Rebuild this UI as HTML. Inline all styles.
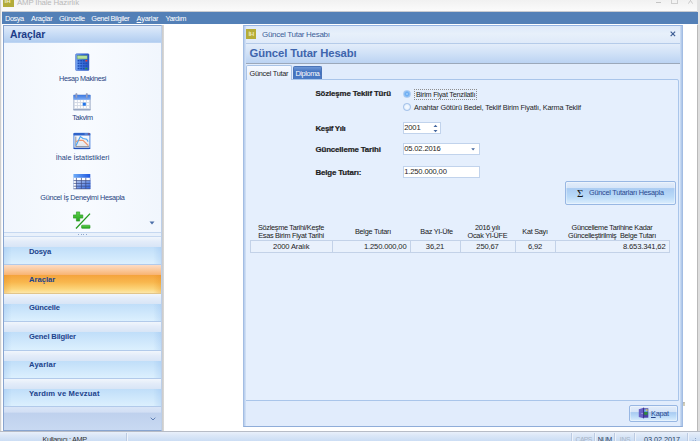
<!DOCTYPE html>
<html lang="tr">
<head>
<meta charset="utf-8">
<title>AMP İhale Hazırlık</title>
<style>
*{box-sizing:border-box;margin:0;padding:0}
html,body{width:700px;height:441px;overflow:hidden;background:#fff}
body{position:relative;font-family:"Liberation Sans","DejaVu Sans",sans-serif;font-size:7.3px;letter-spacing:-0.25px;color:#1e1e1e;line-height:1}
.a{position:absolute;white-space:pre}
.t{position:absolute;white-space:pre;line-height:10px;height:10px}
.b{font-weight:bold}
.c{text-align:center}
.r{text-align:right}
/* window chrome */
#titlebar{left:0;top:0;width:700px;height:11px;background:linear-gradient(#f1f1f1,#fbfbfb)}
#tline{left:0;top:11px;width:700px;height:1px;background:#c9ccd1}
#lborder{left:0;top:0;width:2px;height:441px;background:linear-gradient(90deg,#cfcfcf 0,#cfcfcf 1px,#f4f4f4 1px)}
#rborder{left:697px;top:0;width:3px;height:441px;background:linear-gradient(90deg,#b9b9b9 0,#b9b9b9 1.3px,#dedede 1.3px)}
#menubar{left:2px;top:12px;width:695.6px;height:12px;background:#5380b7}
#menubar span{position:absolute;top:1.6px;color:#fff;font-size:7.4px;line-height:10px;letter-spacing:-0.2px}
/* left panel */
#lp{left:3px;top:25px;width:159px;height:406px;background:#f4f8fe;border:1px solid #88a4cf;border-right:1px solid #bccfe9}
#lphead{left:0;top:0;width:157px;height:17.4px;background:linear-gradient(#e0ebfa 0,#c9ddf6 45%,#b3cef0 92%,#c4d9f4 100%)}
#lpbody{left:0;top:17.4px;width:157px;height:188.6px;background:linear-gradient(90deg,#f1f6fd,#f8fbff 50%,#f1f6fd)}
.itl{color:#27457f;left:0;width:157px;text-align:center}
.nav{left:0;width:157px;height:28.4px}
.nav i{position:absolute;left:0;top:0;width:100%;height:10px;background:linear-gradient(#f1f6fc,#e3ecf9 45%,#d8e5f6)}
.nav b{position:absolute;left:0;top:10px;width:100%;bottom:0;background:linear-gradient(90deg,rgba(120,170,230,.22),rgba(120,170,230,0) 5%,rgba(120,170,230,0) 95%,rgba(120,170,230,.22)),linear-gradient(#c0def9,#dcf0fe);border-bottom:1px solid #b2caea}
.nav span{position:absolute;left:25px;top:9.5px;line-height:10px;font-weight:bold;color:#21438c;font-size:7.6px;letter-spacing:-0.1px}
.nav.sel i{background:linear-gradient(#fddcc5,#fbc99c 50%,#f8b371)}
.nav.sel b{background:linear-gradient(90deg,rgba(225,135,25,.28),rgba(225,135,25,0) 5%,rgba(225,135,25,0) 95%,rgba(225,135,25,.28)),linear-gradient(#f5a33c 0,#f8b74e 40%,#fcd57a 78%,#fde7a8 100%);border-bottom:1px solid #e2c58a}
/* dialog */
#dlg{left:243px;top:25px;width:440px;height:402px;background:#e1ecfc;border:1px solid #a3bde3;border-top-color:#94b3e2;border-bottom-color:#8fadd9}
#dtitle{left:0;top:0;width:438px;height:17px;background:linear-gradient(#dde9f9,#e7f0fb 45%,#dfeaf9)}
#dhead{left:0;top:17px;width:438px;height:21px;background:linear-gradient(#e3edfa 0,#d0e1f7 50%,#bbd3f2 100%);border-top:1px solid #b5cbe9;border-bottom:1px solid #9ba8ba}
#page{left:1px;top:53px;width:434px;height:322px;background:#e5effd;border:1px solid #a9c5ea;border-radius:0 2px 0 0}
.inp{background:#fff;border:1px solid #c1d3ec;height:12px}
.btn{border:1px solid #98b7e3;border-radius:2px;background:linear-gradient(#e3edfa 0,#d6e5f8 5.6px,#a9cbf2 6.6px,#badaf8 68%,#dceefd 100%);box-shadow:inset 0 0 0 1px rgba(255,255,255,.35)}
.gh{color:#202020;text-align:center;line-height:8px;letter-spacing:-0.28px}
.gc{top:161.4px;height:13px;background:#e9f1fc;border:1px solid #c3d2e8;border-left:none;line-height:11.4px;color:#1e1e1e;font-size:7.6px;letter-spacing:-0.15px}
/* status */
#status{left:0;top:431px;width:700px;height:10px;background:linear-gradient(#e9f0fa 0,#dbe7f7 40%,#cbddf4 100%);border-top:1px solid #b7bcc6}
#status .sep{position:absolute;top:1px;width:1px;height:9px;background:#bccbe2;box-shadow:1px 0 0 #eef3fb}
</style>
</head>
<body>
<!-- main window title (cropped) -->
<div class="a" id="titlebar"></div>
<div class="a" style="left:3px;top:-4px;width:11px;height:11px;background:#b3ac3b"></div>
<div class="a" style="left:4.6px;top:-1.6px;font-size:6px;color:#efecc6;font-weight:bold;letter-spacing:0">İH</div>
<div class="a" style="left:17px;top:-1.7px;font-size:7.8px;line-height:10px;color:#b9b9b9;letter-spacing:-0.14px">AMP İhale Hazırlık</div>
<div class="a" style="left:656px;top:2px;width:5px;height:1px;background:#c4c4c4"></div>
<div class="a" style="left:671px;top:-2px;width:7px;height:6px;border:1px solid #cfcfcf;border-top:2px solid #cfcfcf"></div>
<svg class="a" style="left:688px;top:-2.6px" width="5" height="7" viewBox="0 0 5 7"><path d="M.3 .3L4.7 6.7M4.7 .3L.3 6.7" stroke="#c6c6c6" stroke-width=".9" fill="none"/></svg>
<div class="a" id="tline"></div>
<div class="a" id="lborder"></div>
<div class="a" id="rborder"></div>
<div class="a" style="left:697px;top:0;width:3px;height:25px;background:#e3e3e3"></div>

<div class="a" style="left:162px;top:25px;width:2px;height:406px;background:linear-gradient(90deg,#c9c9c9,#dbdbdb)"></div>
<!-- menu bar -->
<div class="a" id="menubar">
<span style="left:3px;letter-spacing:-0.45px">Dosya</span><span style="left:29px;letter-spacing:-0.3px">Araçlar</span><span style="left:57px;letter-spacing:-0.42px">Güncelle</span><span style="left:89.3px;letter-spacing:-0.42px">Genel Bilgiler</span><span style="left:134.6px;letter-spacing:-0.22px"><u>A</u>yarlar</span><span style="left:163.6px;letter-spacing:-0.5px">Yardım</span>
</div>

<!-- left navigation panel -->
<div class="a" id="lp">
 <div class="a" id="lphead"><span class="a b" style="left:6px;top:3px;font-size:10.4px;line-height:12px;color:#1d3c88;letter-spacing:-0.1px">Araçlar</span></div>
 <div class="a" id="lpbody"></div>
 <!-- calculator icon -->
 <svg class="a" style="left:71px;top:27px" width="15" height="18" viewBox="0 0 15 18">
  <defs><linearGradient id="gc" x1="0" x2="1" y1="0" y2="0"><stop offset="0" stop-color="#7eabf3"/><stop offset=".45" stop-color="#3f76e2"/><stop offset="1" stop-color="#2a55c0"/></linearGradient></defs>
  <rect x=".6" y=".8" width="13.4" height="16.8" rx="1" fill="url(#gc)" stroke="#2d59c4" stroke-width=".5"/>
  <rect x="2.1" y="2.7" width="10.1" height="3.3" fill="#b3e09b" stroke="#5c8d6b" stroke-width=".5"/>
  <g fill="#1d4cb4"><rect x="2.6" y="7" width="1.9" height="1.5"/><rect x="5.2" y="7" width="1.9" height="1.5"/><rect x="7.8" y="7" width="1.9" height="1.5"/>
  <rect x="2.6" y="9.6" width="1.9" height="1.5"/><rect x="5.2" y="9.6" width="1.9" height="1.5"/><rect x="7.8" y="9.6" width="1.9" height="1.5"/><rect x="10.4" y="9.6" width="1.9" height="1.5"/>
  <rect x="2.6" y="12.2" width="1.9" height="1.5"/><rect x="5.2" y="12.2" width="1.9" height="1.5"/><rect x="7.8" y="12.2" width="1.9" height="1.5"/><rect x="10.4" y="12.2" width="1.9" height="1.5"/>
  <rect x="2.6" y="14.8" width="1.9" height="1.5"/><rect x="5.2" y="14.8" width="1.9" height="1.5"/><rect x="7.8" y="14.8" width="1.9" height="1.5"/></g>
  <rect x="10.4" y="7" width="1.9" height="1.5" fill="#e8392b"/><rect x="10.4" y="14.8" width="1.9" height="1.5" fill="#27a02f"/>
 </svg>
 <div class="t itl" style="top:48px;letter-spacing:-0.36px">Hesap Makinesi</div>
 <!-- calendar icon -->
 <svg class="a" style="left:69px;top:67px" width="18" height="18" viewBox="0 0 18 18">
  <defs><linearGradient id="gk" x1="0" x2="0" y1="0" y2="1"><stop offset="0" stop-color="#3a78e2"/><stop offset="1" stop-color="#7eabf3"/></linearGradient></defs>
  <rect x=".4" y="1.9" width="17.1" height="15.2" rx=".8" fill="#d2d9e5" stroke="#9cabc6" stroke-width=".5"/>
  <rect x=".4" y="16.2" width="17.1" height="1.1" fill="#8c9dbb"/>
  <rect x=".4" y="1.9" width="17.1" height="4.9" fill="url(#gk)"/>
  <g fill="#fff"><rect x="1.8" y="7.1" width="2.1" height="2"/><rect x="4.8" y="7.1" width="2.1" height="2"/><rect x="7.8" y="7.1" width="2.1" height="2"/><rect x="10.8" y="7.1" width="2.1" height="2"/><rect x="13.8" y="7.1" width="2.1" height="2"/>
  <rect x="1.8" y="10.1" width="2.1" height="2"/><rect x="4.8" y="10.1" width="2.1" height="2"/><rect x="7.8" y="10.1" width="2.1" height="2"/><rect x="13.8" y="10.1" width="2.1" height="2"/>
  <rect x="1.8" y="13.1" width="2.1" height="2"/><rect x="4.8" y="13.1" width="2.1" height="2"/><rect x="7.8" y="13.1" width="2.1" height="2"/><rect x="10.8" y="13.1" width="2.1" height="2"/><rect x="13.8" y="13.1" width="2.1" height="2"/></g>
  <rect x="9.7" y="9.7" width="3.1" height="3" fill="#1f74ea"/>
  <g fill="#9aa3c6" stroke="#7d87ad" stroke-width=".3"><rect x="2.6" y=".3" width="1.6" height="4.7" rx=".8"/><rect x="13" y=".3" width="1.6" height="4.7" rx=".8"/></g>
 </svg>
 <div class="t itl" style="top:87px;letter-spacing:-0.4px">Takvim</div>
 <!-- chart icon -->
 <svg class="a" style="left:69px;top:106px" width="18" height="18" viewBox="0 0 18 18">
  <defs><linearGradient id="gh" x1="0" x2="0" y1="0" y2="1"><stop offset="0" stop-color="#fbfcfe"/><stop offset="1" stop-color="#dfe3ea"/></linearGradient></defs>
  <rect x=".9" y="1.3" width="16" height="15.4" rx=".8" fill="url(#gh)" stroke="#3f7adf" stroke-width=".9"/>
  <rect x=".5" y=".9" width="16.8" height="2.5" rx=".6" fill="#2f63c9"/>
  <rect x=".5" y="15.8" width="16.8" height="1.3" rx=".4" fill="#2350b8"/>
  <rect x="11.6" y="1.5" width="3.2" height="1" fill="#7ea6e6"/><rect x="15.2" y="1.4" width="1.3" height="1.2" fill="#c0564a"/>
  <path d="M2.8 4.6V14.6H16" fill="none" stroke="#6b6f78" stroke-width=".7"/>
  <path d="M3.1 9.6L6 8.3L10 8.3L15.4 13.7" fill="none" stroke="#f0946a" stroke-width="1.2"/>
  <path d="M3.1 13.6L7.3 4.5L10 6.5L13.6 7.2L15.2 9.6" fill="none" stroke="#48a4f6" stroke-width="1.1"/>
 </svg>
 <div class="t itl" style="top:126.5px;letter-spacing:-0.02px">İhale İstatistikleri</div>
 <!-- table icon -->
 <svg class="a" style="left:69px;top:147px" width="18" height="17" viewBox="0 0 18 17">
  <defs><linearGradient id="gt" x1="0" x2="1" y1="0" y2="0"><stop offset="0" stop-color="#6eacf8"/><stop offset="1" stop-color="#1f58e0"/></linearGradient>
  <linearGradient id="gs" x1="0" x2="1" y1="0" y2="1"><stop offset="0" stop-color="#b6caf2"/><stop offset="1" stop-color="#2a62e2"/></linearGradient></defs>
  <rect x=".4" y="1" width="16.9" height="14.9" fill="#fff"/>
  <rect x="3.4" y="7.6" width="13.9" height="8.3" fill="url(#gs)"/>
  <rect x=".4" y="1" width="16.9" height="3.8" rx=".5" fill="url(#gt)"/>
  <g stroke="#3d4d86" stroke-width=".75" fill="none"><path d="M.4 7.6H17.3M.4 10.4H17.3M.4 13.2H17.3M3.4 4.8V15.9M8.4 4.8V15.9M12.8 4.8V15.9"/><path d="M.4 15.8H17.3"/></g>
  <path d="M.5 4.8V15.9" stroke="#8fa9dc" stroke-width=".5"/><path d="M17.2 4.8V15.9" stroke="#3a5fc0" stroke-width=".5"/>
 </svg>
 <div class="t itl" style="top:166.5px;letter-spacing:-0.3px">Güncel İş Deneyimi Hesapla</div>
 <!-- plus/minus icon -->
 <svg class="a" style="left:69px;top:185px" width="18" height="18" viewBox="0 0 18 18">
  <defs><linearGradient id="gp" x1="0" x2="0" y1="0" y2="1"><stop offset="0" stop-color="#5ed24a"/><stop offset="1" stop-color="#27a51f"/></linearGradient></defs>
  <path d="M3.4 .9h3.3v3h3.1v3.2H6.7v3H3.4v-3H.3V3.9h3.1z" fill="url(#gp)" stroke="#1f9219" stroke-width=".6"/>
  <path d="M17 2.6L3 17.5" stroke="#249a1e" stroke-width="1.3"/>
  <rect x="8.6" y="14.2" width="8.4" height="3.1" rx=".5" fill="url(#gp)" stroke="#1f9219" stroke-width=".6"/>
 </svg>
 <svg class="a" style="left:145.4px;top:194.8px" width="6" height="4" viewBox="0 0 6 4"><path d="M.5 .5h5L3 3.5z" fill="#4a6ea8"/></svg>
 <!-- splitter -->
 <div class="a" style="left:0;top:206px;width:157px;height:5px;background:#e9f1fb;border-top:1px solid #c6d8f0;border-bottom:1px solid #c6d8f0"></div>
 <div class="a" style="left:74px;top:208px;width:9px;height:1px;background:repeating-linear-gradient(90deg,#8ea6cc 0,#8ea6cc 1px,transparent 1px,transparent 2.6px)"></div>
 <!-- nav buttons -->
 <div class="a nav" style="top:211px"><i></i><b></b><span style="letter-spacing:-0.17px">Dosya</span></div>
 <div class="a nav sel" style="top:239.4px"><i></i><b></b><span style="letter-spacing:0.02px">Araçlar</span></div>
 <div class="a nav" style="top:267.8px"><i></i><b></b><span style="letter-spacing:-0.17px">Güncelle</span></div>
 <div class="a nav" style="top:296.2px"><i></i><b></b><span style="letter-spacing:-0.15px">Genel Bilgiler</span></div>
 <div class="a nav" style="top:324.6px"><i></i><b></b><span style="letter-spacing:0.18px">Ayarlar</span></div>
 <div class="a nav" style="top:353px"><i></i><b></b><span style="letter-spacing:0.16px">Yardım ve Mevzuat</span></div>
 <div class="a" style="left:0;top:381.4px;width:157px;height:23px;background:linear-gradient(#d9e5f7 0,#d2dff4 22%,#bfd1ed 27%,#c8d9f2 100%)"></div>
 <svg class="a" style="left:145.5px;top:391px" width="6" height="4" viewBox="0 0 6 4"><path d="M.7 .7L3 3L5.3 .7" fill="none" stroke="#5f7fb4" stroke-width="1"/></svg>
</div>

<!-- dialog window -->
<div class="a" id="dlg">
 <div class="a" id="dtitle"></div>
 <div class="a" style="left:0;top:0;width:1.5px;height:400px;background:linear-gradient(90deg,#b4cbec,#d6e4f7);z-index:5"></div>
 <div class="a" style="left:435.6px;top:0;width:2.4px;height:400px;background:linear-gradient(90deg,#d0e0f5,#a9c3e8);z-index:5"></div>
 <div class="a" style="left:2px;top:3px;width:10.2px;height:10px;background:#b5ad38"></div>
 <div class="a" style="left:4.4px;top:3.8px;font-size:6.2px;line-height:7px;color:#ece8b8;font-weight:bold;letter-spacing:-0.3px">İH</div>
 <div class="t" style="left:18px;top:4px;font-size:8px;color:#3c5f99;letter-spacing:-0.3px">Güncel Tutar Hesabı</div>
 <svg class="a" style="left:426.2px;top:5.2px" width="5.8" height="5.8" viewBox="0 0 7 7"><path d="M.8 .8L6.2 6.2M6.2 .8L.8 6.2" stroke="#3d5d94" stroke-width="1.45"/></svg>
 <div class="a" id="dhead"><span class="a b" style="left:5.5px;top:3px;font-size:11.3px;line-height:13px;color:#3f65ad;letter-spacing:-0.1px">Güncel Tutar Hesabı</span></div>
 <!-- tabs -->
 <div class="a" style="left:2px;top:39.4px;width:46px;height:14.6px;background:linear-gradient(#f7faff,#e3edfc);border:1px solid #a9c3e6;border-bottom:none;border-radius:2px 2px 0 0;z-index:2"></div>
 <div class="t" style="left:5.5px;top:43px;z-index:3;color:#1e1e1e">Güncel Tutar</div>
 <div class="a" style="left:48.7px;top:39.7px;width:29.6px;height:13.3px;background:linear-gradient(#6e97d6,#3f6fbd 45%,#4c7cc6);border:1px solid #4a74b8;border-bottom:none;border-radius:2px 2px 0 0"></div>
 <div class="t" style="left:51.5px;top:43px;color:#fff;z-index:3;letter-spacing:-0.4px">Diploma</div>
 <div class="a" id="page">
  <div class="a" style="left:0;top:-1px;width:0;height:0">
  <div class="t b" style="left:69.5px;top:10.2px;font-size:7.9px;letter-spacing:-0.15px;-webkit-text-stroke:.2px #1e1e1e">Sözleşme Teklif Türü</div>
  <div class="t b" style="left:69.5px;top:45.2px;font-size:7.9px;letter-spacing:-0.33px;-webkit-text-stroke:.2px #1e1e1e">Keşif Yılı</div>
  <div class="t b" style="left:69.5px;top:66.3px;font-size:7.9px;letter-spacing:-0.15px;-webkit-text-stroke:.2px #1e1e1e">Güncelleme Tarihi</div>
  <div class="t b" style="left:69.5px;top:88.9px;font-size:7.9px;letter-spacing:-0.15px;-webkit-text-stroke:.2px #1e1e1e">Belge Tutarı:</div>
  <!-- radios -->
  <div class="a" style="left:157.2px;top:11.1px;width:7.6px;height:7.6px;border-radius:50%;background:radial-gradient(#b2d9fc 0,#6eaef3 38%,#8fc1f6 70%,#a8cff8 100%);border:1px solid #a8c9f1"></div>
  <div class="a" style="left:157.2px;top:24.3px;width:7.6px;height:7.6px;border-radius:50%;background:radial-gradient(#f2f8ff 30%,#cfe1f8);border:1px solid #9dbde8"></div>
  <div class="a" style="left:168px;top:10px;width:62.5px;height:10.5px;border:1px dotted #8e8e8e"></div>
  <div class="t" style="left:170px;top:10.8px">Birim Fiyat Tenzilatlı</div>
  <div class="t" style="left:168px;top:23.7px;letter-spacing:-0.15px">Anahtar Götürü Bedel, Teklif Birim Fiyatlı, Karma Teklif</div>
  <!-- inputs -->
  <div class="a inp" style="left:157px;top:43px;width:38px"></div>
  <div class="t" style="left:158.2px;top:44.2px;font-size:7.6px;letter-spacing:-0.15px">2001</div>
  <svg class="a" style="left:186.5px;top:45px" width="5" height="9" viewBox="0 0 5 9"><path d="M.5 3L2.5 .8L4.5 3zM.5 6L2.5 8.2L4.5 6z" fill="#44679f"/></svg>
  <div class="a inp" style="left:157px;top:64px;width:76.5px"></div>
  <div class="t" style="left:158.2px;top:65.2px;font-size:7.6px;letter-spacing:-0.15px">05.02.2016</div>
  <svg class="a" style="left:225.4px;top:69px" width="4.2" height="2.6" viewBox="0 0 5 3"><path d="M.3 .3h4.4L2.5 2.8z" fill="#44679f"/></svg>
  <div class="a inp" style="left:157px;top:87px;width:76.5px"></div>
  <div class="t" style="left:158.2px;top:88.2px;font-size:7.6px;letter-spacing:-0.15px">1.250.000,00</div>
  <!-- calc button -->
  <div class="a btn" style="left:319px;top:102px;width:111px;height:23.5px"></div>
  <div class="a" style="left:331px;top:107.6px;font-family:'Liberation Serif','DejaVu Serif',serif;font-size:11px;line-height:12px;color:#151515;letter-spacing:0">Σ</div>
  <div class="t" style="left:343px;top:108.5px;color:#28488f">Güncel Tutarları Hesapla</div>
  <!-- grid header -->
  <div class="a gh" style="left:4px;top:145px;width:82px">Sözleşme Tarihi/Keşfe
Esas Birim Fiyat Tarihi</div>
  <div class="a gh" style="left:88px;top:149.2px;width:78px">Belge Tutarı</div>
  <div class="a gh" style="left:165.5px;top:149.2px;width:50px">Baz YI-Üfe</div>
  <div class="a gh" style="left:214px;top:145px;width:55px">2016 yılı
Ocak Yİ-ÜFE</div>
  <div class="a gh" style="left:269px;top:149.2px;width:40px">Kat Sayı</div>
  <div class="a gh" style="left:309px;top:145px;width:114px">Güncelleme Tarihine Kadar
Güncelleştirilmiş  Belge Tutarı</div>
  <!-- grid row -->
  <div class="a gc c" style="left:4px;width:82.5px;border-left:1px solid #c3d2e8">2000 Aralık</div>
  <div class="a gc r" style="left:86.5px;width:78px;padding-right:3px">1.250.000,00</div>
  <div class="a gc c" style="left:164.5px;width:50px">36,21</div>
  <div class="a gc c" style="left:214.5px;width:55px">250,67</div>
  <div class="a gc c" style="left:269.5px;width:40px">6,92</div>
  <div class="a gc r" style="left:309.5px;width:114px;padding-right:3px">8.653.341,62</div>
  </div>
 </div>
 <!-- close button -->
 <div class="a btn" style="left:385px;top:379px;width:49px;height:16.6px"></div>
 <svg class="a" style="left:394px;top:381px" width="11" height="12" viewBox="0 0 11 12">
  <rect x="4.6" y="1.3" width="5.7" height="9.4" fill="#4b43a6"/>
  <rect x="6.1" y="2.3" width="3.5" height="2.6" fill="#79b4ee"/><rect x="8.2" y="2.3" width="1.4" height="1.5" fill="#f2c83c"/>
  <rect x="6.1" y="4.9" width="3.5" height="2.9" fill="#2f8e3c"/>
  <path d="M.8 2.3L5.6 .7V11.3L.8 9.9z" fill="#6860c4"/>
  <path d="M5.6 .7V11.3" stroke="#352d82" stroke-width=".9"/>
  <rect x="3.6" y="6" width=".9" height=".9" fill="#d9d6f2"/>
 </svg>
 <div class="t" style="left:407px;top:382.6px;color:#28488f"><u>K</u>apat</div>
</div>
<div class="a" style="left:683px;top:401.5px;width:2.2px;height:4.2px;background:linear-gradient(135deg,#a9acb8,#d9d3b4 60%,#c4c5d0)"></div>

<!-- status bar -->
<div class="a" id="status">
 <div class="t" style="left:42.5px;top:2.9px;color:#333;letter-spacing:-0.34px">Kullanıcı : AMP</div>
 <div class="sep" style="left:126px"></div>
 <div class="sep" style="left:571px"></div>
 <div class="t" style="left:575.6px;top:2.9px;font-size:6.8px;letter-spacing:-0.6px;color:#a9b5c6">CAPS</div>
 <div class="sep" style="left:594px"></div>
 <div class="t" style="left:597.8px;top:2.9px;font-size:6.8px;letter-spacing:-0.6px;color:#2b3f63">NUM</div>
 <div class="sep" style="left:614px"></div>
 <div class="t" style="left:619.8px;top:2.9px;font-size:6.8px;letter-spacing:-0.3px;color:#a9b5c6">INS</div>
 <div class="sep" style="left:634px"></div>
 <div class="t" style="left:644px;top:2.6px;letter-spacing:-0.05px;color:#2b3f63">03.02.2017</div>
 <div class="sep" style="left:687px"></div>
 <div class="a" style="left:695px;top:6px;width:1.2px;height:1.2px;background:#8da3c8;box-shadow:0 2.2px 0 #8da3c8,-2.4px 2.2px 0 #8da3c8"></div>
</div>
</body>
</html>
